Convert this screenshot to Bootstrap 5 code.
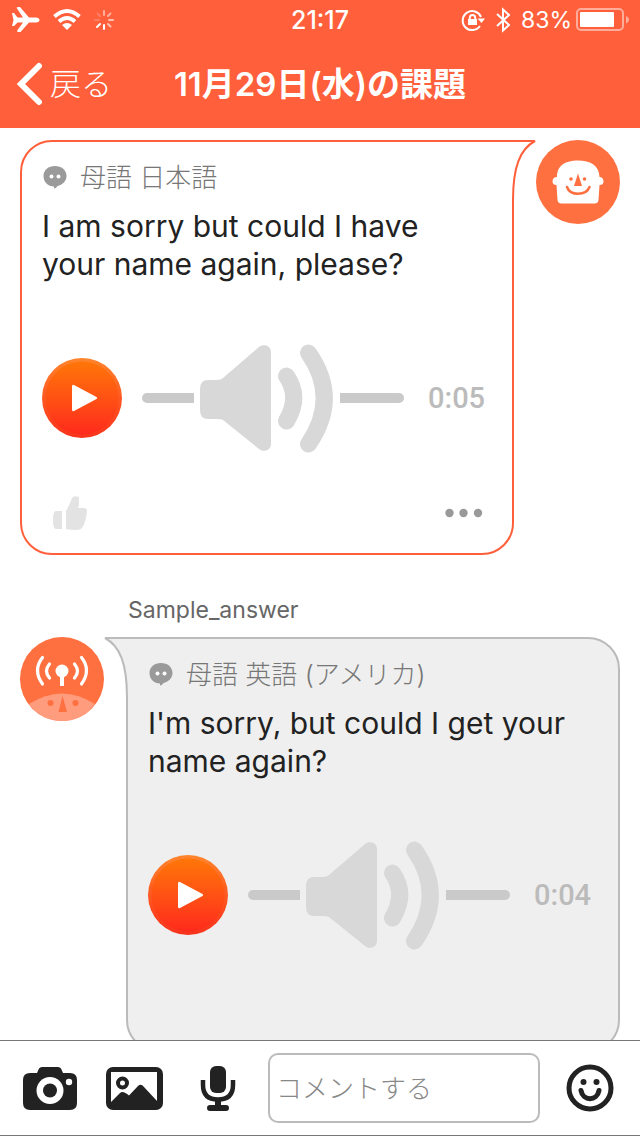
<!DOCTYPE html>
<html lang="ja">
<head>
<meta charset="utf-8">
<meta name="viewport" content="width=device-width, initial-scale=1">
<title>11月29日(水)の課題</title>
<link href="https://cdn.jsdelivr.net/npm/bootstrap@5.3.0/dist/css/bootstrap.min.css" rel="stylesheet">
<style>
  :root { --brand: #ff5f3b; --ink: #222; }
  body { font-family: Inter, "Noto Sans CJK JP", sans-serif; color: var(--ink); background: #fff; }
  svg { display: block; flex: none; }
  button { border: 0; padding: 0; background: none; color: inherit; }
  .app-header { background: var(--brand); color: #fff; }
  .three-col { display: grid; grid-template-columns: 1fr auto 1fr; align-items: center; }
  .status-bar { height: 40px; padding: 0 10px; font-size: 23px; line-height: 40px; }
  .status-icons { gap: 12px; }
  .status-time { font-weight: 500; font-size: 25px; }
  .title-bar { height: 88px; padding: 0 16px; }
  .title-bar h1 { font-size: 33px; line-height: 40px; font-weight: 600; }
  .back-link { color: #fff; font-size: 31px; line-height: 40px; font-weight: 300; gap: 6px; }
  .thread { min-height: 0; padding: 12px 20px 0; }
  .message { gap: 22px; }
  .bubble { border: 2px solid var(--edge); background: var(--fill); border-radius: 32px; padding: 18px 20px 22px; min-width: 0; }
  .bubble-own { --edge: #ff5f3b; --fill: #fff; border-top-right-radius: 0; }
  .bubble-other { --edge: #bbb; --fill: #efefef; border-top-left-radius: 0; }
  .tail { position: absolute; top: -2px; fill: var(--fill); stroke: var(--edge); stroke-width: 2; }
  .bubble-own .tail { left: 100%; }
  .bubble-other .tail { right: 100%; }
  .language { height: 36px; gap: 13px; color: #777; font-size: 26px; line-height: 36px; font-weight: 300; }
  .sentence { font-size: 30px; line-height: 38px; margin: 11px 0 60px; padding-right: 20px; }
  .sender { color: #666; font-size: 23px; line-height: 28px; margin: 41px 0 13px 108px; }
  .player-line { margin: 0 24px 0 20px; }
  .track { height: 10px; background: #cacaca; }
  .track-start { width: 52px; }
  .duration { width: 64px; font: 500 29px/36px Roboto, sans-serif; color: #bbb; }
  .actions { height: 36px; margin-top: 42px; padding: 0 8px; }
  .composer { background: #fff; border-top: 1px solid #777; border-bottom: 1px solid #777; padding: 12px 24px 12px 22px; gap: 24px; }
  .composer .form-control { height: 70px; border: 2px solid #bbb; border-radius: 10px; padding: 0 6px; font-size: 26px; font-weight: 300; }
  .composer .form-control::placeholder { color: #888; }
</style>
</head>
<body>
<svg class="position-absolute" width="0" height="0" aria-hidden="true">
  <defs>
    <linearGradient id="play-fill" x1="0" y1="0" x2="0" y2="1">
      <stop offset="0" stop-color="#ff7608"/><stop offset=".5" stop-color="#ff5214"/><stop offset="1" stop-color="#ff2a1c"/>
    </linearGradient>
    <linearGradient id="play-rim" x1="0" y1="0" x2="0" y2="1">
      <stop offset="0" stop-color="#ff852c"/><stop offset=".6" stop-color="#ff5020"/><stop offset="1" stop-color="#f8331c"/>
    </linearGradient>
  </defs>
  <symbol id="icon-chat" viewBox="0 0 25 24">
    <path fill="#9a9a9a" d="M13 0C19.600 0 24.500 4 24.500 10C24.500 15.500 20 19 15.500 20C14.500 21.500 13.500 22.400 12 22.500V20.500C6 20.500 1.500 16 1.500 10C1.500 4 6.400 0 13 0Z"/>
    <circle cx="9.500" cy="10.500" r="2" fill="#fff"/><circle cx="16.500" cy="10.500" r="2" fill="#fff"/>
  </symbol>
  <symbol id="icon-play" viewBox="0 0 80 80">
    <circle cx="40" cy="40" r="40" fill="url(#play-rim)"/>
    <circle cx="40" cy="40" r="36.500" fill="url(#play-fill)"/>
    <path fill="#fff" d="M30 28.500Q30 26 32 27L54.500 39Q56 40 54.500 41L32 53Q30 54 30 51.500Z"/>
  </symbol>
  <symbol id="icon-speaker" viewBox="0 0 146 110">
    <path fill="#d8d8d8" d="M6 46Q6 37 14 37H23Q27 37 29 35L65 4C70 0 77 3 77 9V101C77 107 70 110 65 106L29 77Q27 76 23 76H14Q6 76 6 67Z"/>
    <g fill="none" stroke="#d8d8d8" stroke-width="17" stroke-linecap="round"><path d="M92.500 33Q107 54 92.500 78"/><path d="M114.500 10Q146 55 114.500 101"/></g>
  </symbol>
</svg>

<div class="vh-100 d-flex flex-column overflow-hidden">
  <header class="app-header flex-shrink-0">
    <div class="status-bar three-col">
      <div class="status-icons d-flex align-items-center">
        <svg width="30" height="28" viewBox="0 0 30 28" fill="#fff"><path d="M2 7H4L7.500 11.500H13L7 2.500Q6 1 8 1H10L19 11.500H26Q29.500 12 29.500 14Q29.500 16 26 16.500H19L10.500 26H8Q6.500 26 7.500 24L13 16.500H7.500L4 20H2L3.500 14Z"/></svg>
        <svg width="30" height="24" viewBox="0 0 30 24"><g fill="none" stroke="#fff" stroke-width="4"><path d="M2.500 8.500Q15 -2.500 27.500 8.500"/><path d="M7 13.500Q15 6.500 23 13.500"/></g><path fill="#fff" d="M10 17Q15 13 20 17L15 22Z"/></svg>
        <svg width="20" height="24" viewBox="-10 -12 20 24" stroke="#fff" stroke-width="2" stroke-linecap="round"><path d="M0 5V9"/><path d="M-4 4L-7 7"/><path opacity=".6" d="M4 4L6.500 6.500M5 0H9"/><path opacity=".5" d="M4 -4L6.500 -6.500M0 -5V-9"/><path opacity=".2" d="M-4 -4L-6.500 -6.500M-5 0H-9"/></svg>
      </div>
      <div class="status-time">21:17</div>
      <div class="d-flex align-items-center justify-content-end">
        <svg width="24" height="24" viewBox="0 0 24 24" fill="none" stroke="#fff" stroke-width="2"><path d="M19 18A9.500 9.500 0 1 1 20 9"/><path fill="#fff" stroke="none" d="M16.500 10.500H24L20.500 15Z"/><path fill="#fff" stroke="none" d="M7 11H16V17H7Z"/><path d="M8.800 12V9.500Q9 7 11.500 7Q14 7 14.200 9.500V12"/></svg>
        <svg class="ms-2" width="20" height="26" viewBox="0 0 20 26" fill="none" stroke="#fff" stroke-width="2"><path d="M4 7L16 18L10 23.500V2.500L16 8L4 19"/></svg>
        <span class="ms-2 me-1">83%</span>
        <svg width="54" height="24" viewBox="0 0 54 24"><rect x="1" y="1" width="46" height="21" rx="4" fill="none" stroke="#ffad9a" stroke-width="2"/><rect x="4" y="4" width="34" height="15" rx="1" fill="#fff"/><path fill="#ffad9a" d="M50 8Q53 9 53 12Q53 14 50 15.500Z"/></svg>
      </div>
    </div>
    <nav class="title-bar three-col" aria-label="課題">
      <a class="back-link d-flex align-items-center text-decoration-none" href="#">
        <svg width="28" height="44" viewBox="0 0 28 44" fill="none" stroke="#fff" stroke-width="6" stroke-linecap="round" stroke-linejoin="miter"><path d="M23 4L5 22L23 40"/></svg>戻る
      </a>
      <h1 class="m-0 text-nowrap">11月29日(水)の課題</h1>
    </nav>
  </header>

  <main class="thread flex-fill overflow-hidden">
    <article class="message d-flex align-items-start">
      <div class="bubble bubble-own position-relative flex-fill">
        <svg class="tail" width="26" height="60" viewBox="0 0 26 60"><path stroke="none" d="M-2 2H22C9 8 2 24 2 60H-2Z"/><path fill="none" d="M-2 1H23C8 9 1 27 1 60"/></svg>
        <div class="language d-flex align-items-center"><svg width="25" height="24"><use href="#icon-chat"/></svg><span class="text-nowrap">母語 日本語</span></div>
        <p class="sentence">I am sorry but could I have your name again, please?</p>
        <div class="d-flex align-items-center">
          <button type="button" aria-label="再生"><svg width="80" height="80"><use href="#icon-play"/></svg></button>
          <div class="player-line d-flex align-items-center flex-fill">
            <div class="track track-start rounded-start-pill"></div>
            <svg width="146" height="110"><use href="#icon-speaker"/></svg>
            <div class="track rounded-end-pill flex-fill"></div>
          </div>
          <span class="duration">0:05</span>
        </div>
        <div class="actions d-flex align-items-center justify-content-between">
          <button type="button" aria-label="いいね"><svg width="38" height="36" viewBox="0 0 38 36" fill="#e3e3e3"><path d="M6 16H12V34H6Q3 34 3 25Q3 16 6 16Z"/><path d="M16 16Q20 9 22 3Q24 0 29 2V8Q29 12 28 13H34Q37 13 37 16Q36 27 32 33Q30 35 25 35Q20 35 16 34Z"/></svg></button>
          <button type="button" aria-label="その他"><svg width="40" height="12" viewBox="0 0 40 12" fill="#999"><circle cx="5.500" cy="6" r="4.200"/><circle cx="19.500" cy="6" r="4.200"/><circle cx="34" cy="6" r="4.200"/></svg></button>
        </div>
      </div>
      <svg width="84" height="84" viewBox="0 0 84 84" role="img" aria-label="自分">
        <circle cx="42" cy="42" r="42" fill="#ff7040"/>
        <path fill="#fff" d="M21 37C21 25 30 20.500 42 20.500S63 25 63.500 37C66 37 67.500 39 67.500 41.500S66 45 63.500 45L62.500 60Q62 63.500 58.500 63.500H25.500Q22 63.500 21.500 60L20.500 45C18 45 16.500 44 16.500 41.500S18 37 21 37Z"/>
        <g fill="#ff7040"><circle cx="35" cy="39" r="1.800"/><circle cx="48.500" cy="39" r="1.800"/><path d="M42 33.500L46 46H38Z"/></g>
        <path fill="none" stroke="#ff7040" stroke-width="2.500" stroke-linecap="round" d="M31 47C34 56 50 56 53.500 47"/>
      </svg>
    </article>

    <div class="sender">Sample_answer</div>
    <article class="message d-flex align-items-start">
      <svg width="84" height="84" viewBox="0 0 84 84" role="img" aria-label="Sample_answer">
        <circle cx="42" cy="42" r="42" fill="#ff7040"/>
        <path fill="#ff9c7d" d="M9 67Q42 46 75 67Q63 84 42 84T9 67Z"/>
        <g fill="#ff7040"><circle cx="30.500" cy="66" r="3"/><circle cx="55.500" cy="66" r="3"/><path d="M42.500 59L47 75H38.500Z"/></g>
        <circle cx="42" cy="34" r="6.500" fill="#fff"/>
        <path stroke="#fff" stroke-width="4" d="M42 36V49"/>
        <g fill="none" stroke="#fff" stroke-width="3.200" stroke-linecap="round"><path d="M29.500 27Q23.500 34 29.500 41M22.500 20.500Q12.500 33 22.500 47M54.500 27Q60.500 34 54.500 41M61.500 20.500Q71.500 33 61.500 47"/></g>
      </svg>
      <div class="bubble bubble-other position-relative flex-fill">
        <svg class="tail" width="26" height="60" viewBox="0 0 26 60"><path stroke="none" d="M28 2H4C17 8 24 24 24 60H28Z"/><path fill="none" d="M28 1H3C18 9 25 27 25 60"/></svg>
        <div class="language d-flex align-items-center"><svg width="25" height="24"><use href="#icon-chat"/></svg><span class="text-nowrap">母語 英語 (アメリカ)</span></div>
        <p class="sentence">I'm sorry, but could I get your name again?</p>
        <div class="d-flex align-items-center">
          <button type="button" aria-label="再生"><svg width="80" height="80"><use href="#icon-play"/></svg></button>
          <div class="player-line d-flex align-items-center flex-fill">
            <div class="track track-start rounded-start-pill"></div>
            <svg width="146" height="110"><use href="#icon-speaker"/></svg>
            <div class="track rounded-end-pill flex-fill"></div>
          </div>
          <span class="duration">0:04</span>
        </div>
        <div class="actions"></div>
      </div>
    </article>
  </main>

  <form class="composer d-flex align-items-center flex-shrink-0">
    <button type="button" aria-label="カメラ"><svg width="58" height="48" viewBox="0 0 58 48" fill="#222"><path d="M8 9H15L17 4.500Q18 3 20 3H36Q38 3 39 4.500L41 9H48Q55 9 55 16V39Q55 46 48 46H8Q1 46 1 39V16Q1 9 8 9Z"/><circle cx="28" cy="26.500" r="13.500" fill="#fff"/><circle cx="28" cy="26.500" r="7"/><circle cx="47" cy="18" r="3.200" fill="#fff"/></svg></button>
    <button type="button" aria-label="写真"><svg width="62" height="48" viewBox="0 0 62 48"><rect x="2" y="3" width="57" height="43" rx="7" fill="#222"/><path fill="#fff" d="M7 8H53V37L40 23Q37 19 34 22L25 31.500Q19 26 16 29L7 38Z"/><circle cx="18.500" cy="19" r="4.500" fill="none" stroke="#222" stroke-width="4"/></svg></button>
    <button type="button" aria-label="録音"><svg width="54" height="48" viewBox="0 0 54 48"><rect x="20" y="2" width="16" height="27" rx="6" fill="#222"/><path fill="none" stroke="#222" stroke-width="4.500" d="M13 16V21Q13 35.500 28 35.500T43 21V16"/><path fill="#222" d="M25 35H31V41H36Q39 41 39 44T36 47H20Q17 47 17 44T20 41H25Z"/></svg></button>
    <input class="form-control flex-fill" type="text" placeholder="コメントする" aria-label="コメントする">
    <button type="button" aria-label="スタンプ"><svg width="52" height="48" viewBox="0 0 52 48" fill="none" stroke="#222" stroke-width="5"><circle cx="26" cy="24" r="21"/><circle cx="19.500" cy="18" r="3" fill="#222" stroke="none"/><circle cx="32.500" cy="18" r="3" fill="#222" stroke="none"/><path stroke-linecap="round" d="M17 26.500C19 37.500 33 37.500 35 26.500"/></svg></button>
  </form>
</div>
<script src="https://cdn.jsdelivr.net/npm/bootstrap@5.3.0/dist/js/bootstrap.bundle.min.js"></script>
</body>
</html>
